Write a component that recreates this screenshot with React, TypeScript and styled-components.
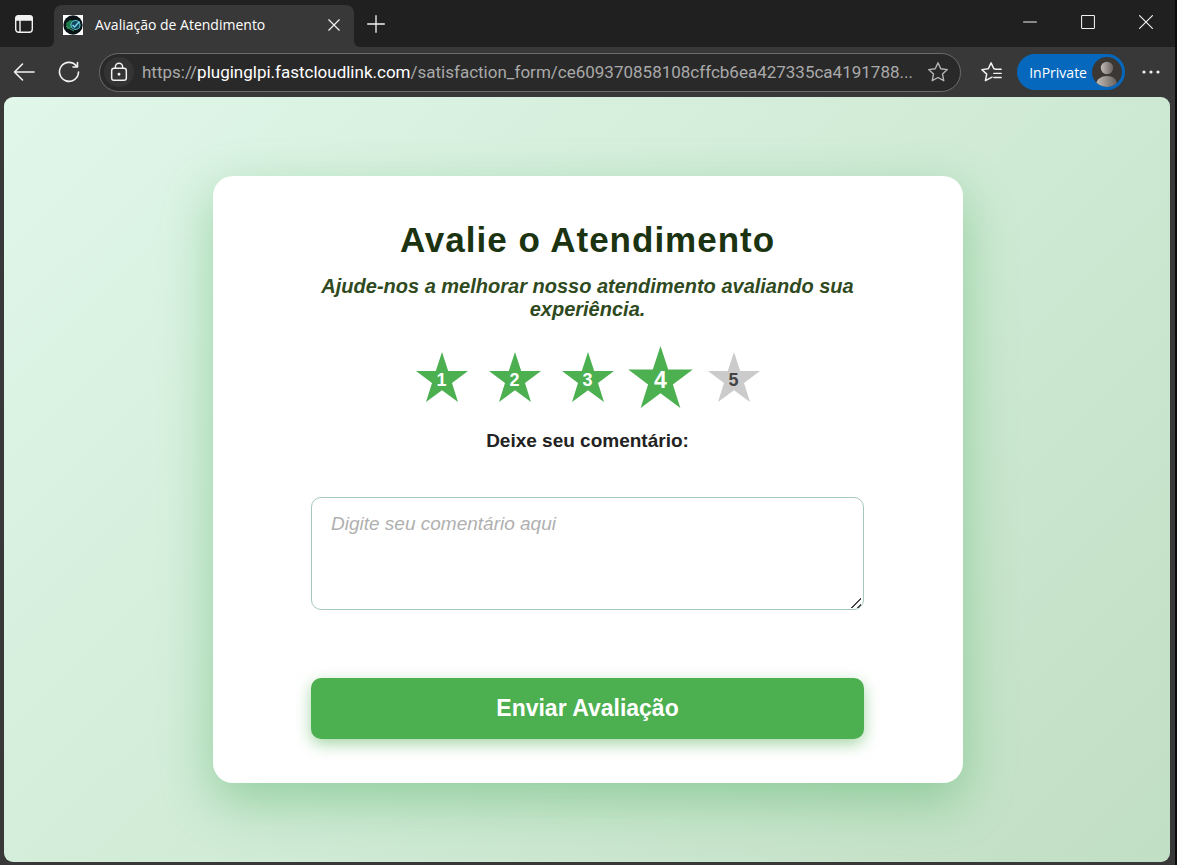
import React, { useState } from "react";
import styled, { createGlobalStyle } from "styled-components";

const GlobalStyle = createGlobalStyle`
  * { box-sizing: border-box; }
  body { margin: 0; background: #383838; }
  button, textarea, input { font: inherit; }
`;

const Window = styled.div`
  min-height: 100vh;
  display: flex;
  flex-direction: column;
  background: #383838;
  border-right: 2px solid #0c0c0c;
  font-family: "Open Sans", "Noto Sans", sans-serif;
  color: #fff;
`;

const TabStrip = styled.header`
  height: 47px;
  flex: none;
  display: flex;
  align-items: stretch;
  background: #202020;
`;

const IconButton = styled.button<{ $width?: number }>`
  width: ${({ $width }) => $width ?? 32}px;
  flex: none;
  display: flex;
  align-items: center;
  justify-content: center;
  padding: 0;
  border: 0;
  background: none;
  color: #f2f2f2;

  svg { display: block; }
`;

const TabEdge = styled.div<{ $side: "left" | "right" }>`
  width: 6px;
  background: #383838;

  &::before {
    content: "";
    display: block;
    height: 100%;
    background: #202020;
    border-radius: ${({ $side }) => ($side === "left" ? "0 0 6px 0" : "0 0 0 6px")};
  }
`;

const Tab = styled.div`
  width: 300px;
  margin-top: 5px;
  padding: 0 4px 2px 9px;
  display: flex;
  align-items: center;
  gap: 12px;
  border-radius: 8px 8px 0 0;
  background: #383838;
  font-size: 14px;
`;

const TabTitle = styled.span`
  flex: 1;
  padding-bottom: 2px;
  white-space: nowrap;
`;

const WindowControls = styled.div`
  margin-left: auto;
  display: flex;
  padding-bottom: 4px;
`;

const Toolbar = styled.nav`
  height: 50px;
  flex: none;
  display: flex;
  align-items: center;
  padding-right: 8px;
`;

const AddressBar = styled.div`
  flex: 1;
  min-width: 0;
  height: 39px;
  margin: 0 15px 0 9px;
  padding: 0 6px 0 4px;
  display: flex;
  align-items: center;
  gap: 8px;
  border: 1px solid #6c6c6c;
  border-radius: 20px;
  background: #292929;
`;

const SiteInfo = styled(IconButton)`
  height: 30px;
  border-radius: 50%;
  background: #343434;
`;

const Url = styled.span`
  flex: 1;
  min-width: 0;
  overflow: hidden;
  white-space: nowrap;
  text-overflow: ellipsis;
  font-family: Roboto, "Open Sans", sans-serif;
  font-size: 17px;
  color: #a9a9a9;

  strong { font-weight: 400; color: #fff; }
`;

const Profile = styled.button`
  height: 36px;
  margin: 0 10px 0 9px;
  padding: 0 3px 0 12px;
  display: flex;
  align-items: center;
  gap: 5px;
  border: 0;
  border-radius: 18px;
  background: #0568bd;
  color: #fff;
  font-size: 14px;
`;

const Page = styled.main`
  flex: 1;
  margin: 0 5px 3px 4px;
  padding: 40px 20px 40px 22px;
  display: flex;
  align-items: center;
  justify-content: center;
  overflow: hidden;
  border-radius: 9px;
  background: linear-gradient(135deg, #e0f7e9, #c1dfc4);
  font-family: "Liberation Sans", Arial, sans-serif;
`;

const Card = styled.form`
  width: 100%;
  max-width: 750px;
  padding: 42px 99px 44px 98px;
  display: flex;
  flex-direction: column;
  align-items: center;
  border-radius: 20px;
  background: #fff;
  box-shadow: 0 18px 50px rgba(64, 170, 84, 0.42);
  text-align: center;
`;

const Title = styled.h1`
  margin: 0 0 14px;
  font-size: 35px;
  line-height: 43px;
  letter-spacing: 1px;
  color: #1b3311;
`;

const Subtitle = styled.p`
  margin: 0 0 21px;
  font-size: 20px;
  line-height: 23px;
  font-weight: 700;
  font-style: italic;
  color: #2f4a20;
`;

const Rating = styled.fieldset`
  margin: 0 0 18px;
  padding: 0;
  border: 0;
  display: flex;
  gap: 8px;
`;

const StarLabel = styled.label<{ $filled: boolean; $current: boolean }>`
  position: relative;
  width: 65px;
  height: 70px;
  display: grid;
  place-items: center;
  cursor: pointer;
  color: ${({ $filled }) => ($filled ? "#fff" : "#444")};
  font-size: ${({ $current }) => ($current ? 23 : 18)}px;
  font-weight: 700;

  input {
    position: absolute;
    inset: 0;
    margin: 0;
    opacity: 0;
    cursor: pointer;
  }

  svg, span { grid-area: 1 / 1; }
  span { padding-top: 6px; }
  svg { fill: ${({ $filled }) => ($filled ? "#4caf50" : "#cbcbcb")}; }
`;

const CommentLabel = styled.label`
  margin-bottom: 45px;
  font-size: 19px;
  line-height: 22px;
  font-weight: 700;
  color: #222;
`;

const Comment = styled.textarea`
  width: 100%;
  height: 113px;
  margin: 0 0 68px;
  padding: 15px 19px;
  border: 1px solid #a5c9b9;
  border-radius: 10px;
  background: #fff;
  color: #222;
  font-size: 19px;
  line-height: 22px;
  resize: vertical;

  &::placeholder { color: #b0b0b0; font-style: italic; }

  &::-webkit-resizer {
    background: linear-gradient(135deg, transparent 46%, #444 46%, #444 58%, transparent 58%, transparent 76%, #444 76%, #444 88%, transparent 88%) 3px 4px / 10px 10px no-repeat;
  }
`;

const Submit = styled.button`
  width: 100%;
  height: 61px;
  border: 0;
  border-radius: 10px;
  background: #4caf50;
  box-shadow: 0 5px 15px rgba(76, 175, 80, 0.5);
  color: #fff;
  font-size: 23px;
  font-weight: 700;
  cursor: pointer;
`;

const Line = ({ size = 24, width = 1.4, children }: { size?: number; width?: number; children: React.ReactNode }) => (
  <svg width={size} height={size} viewBox="0 0 24 24" fill="none" stroke="currentColor" strokeWidth={width} strokeLinecap="round" strokeLinejoin="round" aria-hidden="true">
    {children}
  </svg>
);

const Favicon = () => (
  <svg width="20" height="20" viewBox="0 0 20 20" aria-hidden="true">
    <rect width="20" height="20" fill="#fff" />
    <circle cx="10" cy="10" r="9.7" fill="#071316" />
    <path d="M3 8l4-3 5 1-3 7-5 1z" fill="#1d7a4b" />
    <circle cx="12.500" cy="10" r="4.500" fill="#12465a" stroke="#5cb9c4" strokeWidth="1.2" />
    <path d="M9.500 10l2 2 5-5.500" fill="none" stroke="#73d5ed" strokeWidth="1.500" />
    <path d="M3 11l4 3 4 2" fill="none" stroke="#3c9a68" />
  </svg>
);

const Avatar = () => (
  <svg width="30" height="30" viewBox="0 0 30 30" aria-hidden="true">
    <defs>
      <linearGradient id="skin"><stop stopColor="#c4bcb6" /><stop offset="1" stopColor="#66615e" /></linearGradient>
      <clipPath id="disc"><circle cx="15" cy="15" r="15" /></clipPath>
    </defs>
    <circle cx="15" cy="15" r="15" fill="#3a3735" />
    <g clipPath="url(#disc)" fill="url(#skin)">
      <circle cx="15" cy="11" r="6.200" />
      <path d="M4 27c1-5 5-8 11-8s9 3 10 7l-4 6H8z" />
    </g>
  </svg>
);

const STAR = "M26 0l6.200 19H52L36 31l6 19-16-11.800L10 50l6-19L0 19h19.800z";

export default function App() {
  const [score, setScore] = useState(4);

  return (
    <Window>
      <GlobalStyle />
      <TabStrip>
        <IconButton $width={48} aria-label="Menu de guias">
          <svg width="18" height="18" viewBox="0 0 18 18" fill="none" stroke="currentColor" strokeWidth="1.400" aria-hidden="true">
            <rect x="0.700" y="0.700" width="16.600" height="16.600" rx="3" />
            <path d="M1 3.500V3a2 2 0 0 1 2-2h12a2 2 0 0 1 2 2v2H1z" fill="currentColor" />
            <path d="M5 5v12" />
          </svg>
        </IconButton>
        <TabEdge $side="left" />
        <Tab>
          <Favicon />
          <TabTitle>Avaliação de Atendimento</TabTitle>
          <IconButton aria-label="Fechar guia">
            <Line size={14} width={2}><path d="M3 3l18 18M21 3L3 21" /></Line>
          </IconButton>
        </Tab>
        <TabEdge $side="right" />
        <IconButton aria-label="Nova guia">
          <Line size={20} width={1.6}><path d="M12 2v20M2 12h20" /></Line>
        </IconButton>
        <WindowControls>
          <IconButton $width={58} aria-label="Minimizar">
            <Line size={14} width={1.8}><path d="M1 12h22" /></Line>
          </IconButton>
          <IconButton $width={58} aria-label="Maximizar">
            <Line size={14} width={1.8}><rect x="1" y="1" width="22" height="22" rx="1" /></Line>
          </IconButton>
          <IconButton $width={58} aria-label="Fechar">
            <Line size={14} width={2}><path d="M1 1l22 22M23 1L1 23" /></Line>
          </IconButton>
        </WindowControls>
      </TabStrip>

      <Toolbar aria-label="Navegação">
        <IconButton $width={48} aria-label="Voltar">
          <Line width={1.6}><path d="M22 12H2.500M10.500 4l-8 8 8 8" /></Line>
        </IconButton>
        <IconButton $width={42} aria-label="Atualizar">
          <Line width={1.6}><path d="M19.500 6A9.500 9.500 0 1 0 21.500 12M20.500 2.500V7H16" /></Line>
        </IconButton>
        <AddressBar>
          <SiteInfo $width={30} aria-label="Informações do site">
            <Line size={22} width={1.6}>
              <rect x="4" y="8" width="16" height="13" rx="2.500" />
              <path d="M8 8V6.500a4 4 0 0 1 8 0V8" />
              <circle cx="12" cy="14.500" r="0.800" fill="currentColor" />
            </Line>
          </SiteInfo>
          <Url>https://<strong>pluginglpi.fastcloudlink.com</strong>/satisfaction_form/ce609370858108cffcb6ea427335ca4191788...</Url>
          <IconButton aria-label="Adicionar aos favoritos">
            <Line size={22} width={1.5}><path d="M12 2l3 6.500 7.200.900-5.300 4.900 1.400 7.200L12 18l-6.300 3.500 1.400-7.200L1.800 9.400 9 8.500z" opacity="0.700" /></Line>
          </IconButton>
        </AddressBar>
        <IconButton aria-label="Favoritos">
          <Line size={22} width={1.6}><path d="M15 8.500h-1L11 2 8 8.500l-7 .900 5.200 4.900L4.800 21.500l6.200-3.400 1-.500M15.500 9H22M14 13.500h8M14 18h8" /></Line>
        </IconButton>
        <Profile>InPrivate<Avatar /></Profile>
        <IconButton aria-label="Configurações e mais">
          <svg width="18" height="4" viewBox="0 0 18 4" fill="currentColor" aria-hidden="true">
            <circle cx="2" cy="2" r="1.600" /><circle cx="9" cy="2" r="1.600" /><circle cx="16" cy="2" r="1.600" />
          </svg>
        </IconButton>
      </Toolbar>

      <Page>
        <Card onSubmit={(e) => e.preventDefault()}>
          <Title>Avalie o Atendimento</Title>
          <Subtitle>Ajude-nos a melhorar nosso atendimento avaliando sua experiência.</Subtitle>
          <Rating aria-label="Nota">
            {[1, 2, 3, 4, 5].map((n) => (
              <StarLabel key={n} $filled={n <= score} $current={n === score}>
                <svg width={n === score ? 65 : 52} height={n === score ? 62 : 50} viewBox="0 0 52 50" aria-hidden="true">
                  <path d={STAR} />
                </svg>
                <span>{n}</span>
                <input type="radio" name="score" value={n} checked={n === score} onChange={() => setScore(n)} />
              </StarLabel>
            ))}
          </Rating>
          <CommentLabel htmlFor="comment">Deixe seu comentário:</CommentLabel>
          <Comment id="comment" placeholder="Digite seu comentário aqui" />
          <Submit type="submit">Enviar Avaliação</Submit>
        </Card>
      </Page>
    </Window>
  );
}
